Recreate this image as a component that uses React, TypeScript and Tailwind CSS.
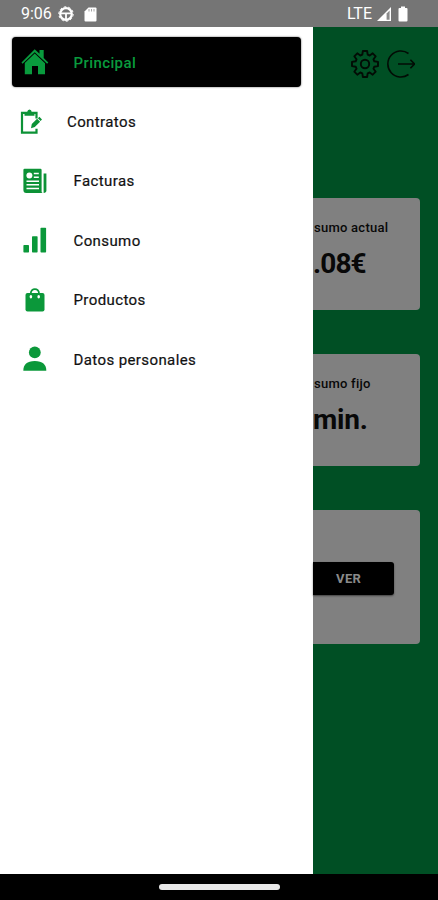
import type { ReactNode } from 'react';

const HomeIcon = () => (
  <svg viewBox="0 0 28 28" className="w-7 h-7" fill="#099b3d">
    <path d="M13.7 1.2 18.5 5.8V2h4.2v8l4.6 4.4-1.2 1.3L13.7 4.2 1.6 15.7.5 14.4z" />
    <path d="M13.7 5.6 24 15.2V26.3h-7V18h-6v8.3H3.8V15z" />
  </svg>
);

const ContractIcon = () => (
  <svg viewBox="0 0 24 26" className="w-6 h-[26px]" fill="none">
    <path d="M18.500 9.500V3.800H4v19.800h14.500v-3.800" stroke="#0c9236" strokeWidth="2.200" />
    <path d="M6.500 6.800V3h2.700Q9.500.5 11.500.5t2.200 2.500h2.800v3.800z" fill="#0c9236" />
    <path d="m13 19.200.8-4.200 5.300-5.200 3 2.900-5.300 5.300zM19.900 9.200l1.500-1.400 2.600 2.600-1.500 1.500z" fill="#0c9236" />
  </svg>
);

const InvoiceIcon = () => (
  <svg viewBox="0 0 26 26" className="w-[26px] h-[26px]" fill="none">
    <path d="M2.600.8h15.800q1.200 0 1.200 1.200v21.500q0 1.500 1.500 1.500H4.200Q1.400 25 1.400 22V2q0-1.200 1.200-1.200z" fill="#0c9236" />
    <path d="M21.600 5.500h2.800v16.800q0 2.700-2.800 2.700z" fill="#0c9236" />
    <circle cx="7.400" cy="7.400" r="3" fill="#fff" />
    <path d="M11.800 5.500h5M11.800 9.200h5M4.500 13.200h12.500M4.500 16.800h12.500M4.500 20.500h12.500" stroke="#fff" strokeWidth="1.400" />
  </svg>
);

const ChartIcon = () => (
  <svg viewBox="0 0 26 26" className="w-[26px] h-[26px]" fill="#0b983a">
    <rect x="1.400" y="18" width="5.600" height="7.500" rx=".7" />
    <rect x="10" y="9.300" width="5.600" height="16.200" rx=".7" />
    <rect x="18.500" y=".7" width="5.600" height="24.800" rx=".7" />
  </svg>
);

const BagIcon = () => (
  <svg viewBox="0 0 26 26" className="w-[26px] h-[26px]" fill="none">
    <rect x="3.500" y="6" width="19" height="18.500" rx="2" fill="#0b983a" />
    <path d="M8.800 10V6.500C8.800 .6 17 .6 17 6.500V10" stroke="#0b983a" strokeWidth="1.800" />
    <ellipse cx="8.900" cy="9.700" rx="1.300" ry="1.800" fill="#fff" />
    <ellipse cx="16.700" cy="9.700" rx="1.300" ry="1.800" fill="#fff" />
  </svg>
);

const UserIcon = () => (
  <svg viewBox="0 0 26 26" className="w-[26px] h-[26px]" fill="#0b983a">
    <circle cx="12.800" cy="6.400" r="5.900" />
    <path d="M1.300 24.800C1.300 18.500 5 15 12.800 15s11.500 3.500 11.500 9.800z" />
  </svg>
);

const GearIcon = () => (
  <svg viewBox="0 0 28 28" className="w-7 h-7" fill="none" stroke="#020c05" strokeWidth="1.900" strokeLinejoin="round">
    <path d="M11.900 1h4.200l.6 3.700 2 .8 3-2.200 3 3-2.200 3 .8 2 3.700.6v4.200l-3.700.6-.8 2 2.200 3-3 3-3-2.200-2 .8-.6 3.700h-4.200l-.6-3.700-2-.8-3 2.200-3-3 2.200-3-.8-2L1 16.100v-4.200l3.700-.6.8-2-2.200-3 3-3 3 2.200 2-.8z" />
    <circle cx="14" cy="14" r="4.200" />
  </svg>
);

const LogoutIcon = () => (
  <svg viewBox="0 0 28 28" className="w-7 h-7" fill="none" stroke="#020c05" strokeWidth="1.600">
    <path d="M21.500 3.500A13 13 0 1 0 21.500 24.500M11 14h16.500M23.400 9.800 27.500 14l-4.100 4.200" />
  </svg>
);

interface MenuItem {
  label: string;
  icon: ReactNode;
  iconClass: string;
}

const items: MenuItem[] = [
  { label: 'Contratos', icon: <ContractIcon />, iconClass: 'pl-[18px] w-[67px]' },
  { label: 'Facturas', icon: <InvoiceIcon />, iconClass: 'pl-[22px] w-[73.5px]' },
  { label: 'Consumo', icon: <ChartIcon />, iconClass: 'pl-[22px] w-[73.5px]' },
  { label: 'Productos', icon: <BagIcon />, iconClass: 'pl-[22px] w-[73.5px]' },
  { label: 'Datos personales', icon: <UserIcon />, iconClass: 'pl-[22px] w-[73.5px]' },
];

const StatusBar = () => (
  <header className="h-[27px] shrink-0 bg-[#757575] flex items-center text-white pl-[21px] pr-[30px]">
    <span className="text-[16px] leading-none w-[37px] pt-px">9:06</span>
    <svg viewBox="0 0 16 16" className="w-4 h-4 mt-px" fill="none" stroke="#fff">
      <circle cx="8" cy="8" r="5.800" strokeWidth="2.200" />
      <circle cx="8" cy="8" r="7.200" strokeWidth="1" strokeDasharray="2.500 2" />
      <path d="M2.500 7.300h11M8 8v5.500" strokeWidth="1.800" />
    </svg>
    <svg viewBox="0 0 13 15" className="w-[13px] h-[15px] ml-[10px] mt-px" fill="#fff">
      <path d="M4.500.5h7q1 0 1 1v12q0 1-1 1h-10q-1 0-1-1V4.500z" />
      <path d="M5 2v2.500M7.500 2v2.500M10 2v2.500" stroke="#a5a5a5" strokeWidth="1" />
    </svg>
    <span className="ml-auto text-[16px] leading-none pt-px">LTE</span>
    <svg viewBox="0 0 14 14" className="w-3.5 h-3.5 ml-[5px] mt-px" fill="none">
      <path d="M14 0v14H0z" fill="#fff" />
      <path d="M12.600 3.500v9.200h-3V6.500z" fill="#8b8b8b" />
    </svg>
    <svg viewBox="0 0 10 16" className="w-2.5 h-4 ml-[7px] mt-px" fill="#fff">
      <path d="M3 .5h4V2h1.500q1 0 1 1v11.500q0 1-1 1h-7q-1 0-1-1V3q0-1 1-1H3z" />
    </svg>
  </header>
);

const Drawer = () => (
  <nav className="w-[313px] shrink-0 bg-white pt-[5px]">
    <div className="h-[60px] flex items-center px-3">
      <div className="w-[289px] h-[50px] rounded-[4px] bg-black flex items-center shadow-[0_0_2px_rgba(0,0,0,0.7)]">
        <div className="w-[61.5px] pl-[9px]"><HomeIcon /></div>
        <span className="text-[15px] font-medium tracking-[0.4px] text-[#099b3d] pt-0.5">Principal</span>
      </div>
    </div>
    {items.map((item) => (
      <div key={item.label} className="h-[59.4px] flex items-center text-[#111]">
        <div className={`shrink-0 ${item.iconClass}`}>{item.icon}</div>
        <span className="text-[15px] tracking-[0.4px] whitespace-nowrap pt-px [-webkit-text-stroke:0.2px_#111]">{item.label}</span>
      </div>
    ))}
  </nav>
);

const Dashboard = () => (
  <main className="flex-1 min-w-0 bg-[#004f24] flex flex-col pr-[18px] text-[#080808]">
    <div className="h-[170.6px] shrink-0 flex items-start justify-end gap-2 pt-[23px] pr-[5px]">
      <GearIcon />
      <LogoutIcon />
    </div>
    <section className="h-[112px] shrink-0 rounded-r-[4px] bg-[#808080] pt-[21px]">
      <p className="text-[13px] leading-[18px] font-medium tracking-[0.25px] whitespace-nowrap pl-px">sumo actual</p>
      <p className="text-[28px] leading-[34px] mt-[10px] font-bold tracking-[-0.9px]">.08€</p>
    </section>
    <section className="h-[112px] mt-[44px] shrink-0 rounded-r-[4px] bg-[#808080] pt-[21px]">
      <p className="text-[13px] leading-[18px] font-medium tracking-[0.25px] whitespace-nowrap pl-px">sumo fijo</p>
      <p className="text-[28px] leading-[34px] mt-[10px] font-bold tracking-[-0.2px]">min.</p>
    </section>
    <section className="h-[134px] mt-[44px] shrink-0 rounded-r-[4px] bg-[#808080] pt-[52.5px]">
      <button className="w-[80.5px] h-[33px] rounded-r-[3px] bg-black text-[#8a8a8a] text-[13px] font-bold tracking-[0.4px] pl-[23px] text-left shadow-[0_1px_2px_rgba(0,0,0,0.5)]">
        VER
      </button>
    </section>
  </main>
);

export default function App() {
  return (
    <div className="w-[438px] h-[900px] flex flex-col overflow-hidden font-['Roboto',sans-serif]">
      <StatusBar />
      <div className="flex flex-1 min-h-0">
        <Drawer />
        <Dashboard />
      </div>
      <footer className="h-[26px] shrink-0 bg-black flex justify-center pt-[10px]">
        <div className="w-[121px] h-[5.5px] rounded-full bg-[#e8e8e8]" />
      </footer>
    </div>
  );
}
